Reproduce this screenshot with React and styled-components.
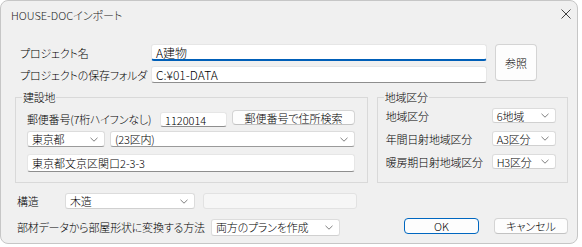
import React from "react";
import styled, { createGlobalStyle } from "styled-components";

const GlobalStyle = createGlobalStyle`
  body {
    margin: 0;
    background: #fff;
    font-family: "Noto Sans CJK JP", "Noto Sans", sans-serif;
    font-size: 11px;
    font-weight: 300;
    letter-spacing: -0.2px;
    color: #000;
    font-feature-settings: "palt";
  }
`;

const Window = styled.div`
  box-sizing: border-box;
  width: 578px;
  height: 244px;
  border: 1px solid #c6c6c6;
  border-radius: 8px;
  background: #f0f0f0;
  display: flex;
  flex-direction: column;
  overflow: hidden;
`;

const TitleBar = styled.div`
  height: 27px;
  display: flex;
  align-items: center;
  justify-content: space-between;
  padding: 0 6px 0 10px;
  font-size: 11px;
  letter-spacing: 0;
  color: #1b1b1b;
`;

const Close = styled.svg`
  width: 10px;
  height: 10px;
  margin-top: -2px;
`;

const Content = styled.div`
  padding: 16px 9px 0 0;
`;

const ProjectSection = styled.div`
  display: flex;
  padding-left: 19px;
`;

const ProjectFields = styled.div`
  display: grid;
  grid-template-columns: 131px 336px;
  grid-auto-rows: 17px;
  row-gap: 5px;
  align-items: center;
`;

const Label = styled.span`
  white-space: nowrap;
  width: ${(p) => (p.$w ? `${p.$w}px` : "auto")};
  flex: none;
`;

const Field = styled.div`
  box-sizing: border-box;
  width: ${(p) => (p.$w ? `${p.$w}px` : "auto")};
  height: ${(p) => p.$h || 16}px;
  background: ${(p) => (p.$disabled ? "#f6f6f6" : "#fff")};
  border: 1px solid ${(p) => (p.$disabled ? "#e2e2e2" : "#e6e6e6")};
  border-bottom: ${(p) =>
    p.$focus
      ? "2px solid #005fb8"
      : p.$disabled
      ? "1px solid #e2e2e2"
      : "1px solid #8e8e8e"};
  border-radius: 3px;
  padding: 0 4px;
  display: flex;
  align-items: center;
  white-space: nowrap;
  overflow: hidden;
  font-size: ${(p) => p.$fs || 11}px;
  letter-spacing: 0;
  flex: none;
`;

const ComboBox = styled.div`
  box-sizing: border-box;
  width: ${(p) => p.$w}px;
  height: ${(p) => p.$h || 16}px;
  background: #fff;
  border: 1px solid #dcdcdc;
  border-bottom-color: ${(p) => (p.$line ? "#9a9a9a" : "#d0d0d0")};
  border-radius: 3px;
  padding: 0 6px 0 4px;
  display: flex;
  align-items: center;
  justify-content: space-between;
  white-space: nowrap;
  flex: none;
`;

const Chevron = styled.svg`
  width: 8px;
  height: 5px;
  flex: none;
`;

const Button = styled.button`
  box-sizing: border-box;
  width: ${(p) => p.$w}px;
  height: ${(p) => p.$h || 16}px;
  padding: 0;
  font: inherit;
  color: #000;
  background: #fdfdfd;
  border: 1px solid ${(p) => (p.$primary ? "#0067c0" : "#d4d4d4")};
  border-bottom-color: ${(p) => (p.$primary ? "#0067c0" : "#c2c2c2")};
  border-radius: 4px;
  display: flex;
  align-items: center;
  justify-content: center;
  flex: none;
  align-self: ${(p) => p.$self || "auto"};
`;

const GroupsRow = styled.div`
  display: flex;
  gap: 9px;
  padding-left: 14px;
  margin-top: 8px;
`;

const Group = styled.fieldset`
  box-sizing: border-box;
  width: ${(p) => p.$w}px;
  height: 92px;
  margin: 0;
  padding: 0;
  border: 1px solid #d9d9d9;
  min-width: 0;
`;

const Legend = styled.legend`
  margin-left: 6px;
  padding: 0 1px;
  line-height: 13px;
  font-size: 11px;
`;

const SiteBody = styled.div`
  display: flex;
  flex-direction: column;
  padding: 6px 13px 0 11px;
`;

const Row = styled.div`
  display: flex;
  align-items: center;
  gap: ${(p) => p.$gap ?? 5}px;
  height: ${(p) => p.$h}px;
  margin-top: ${(p) => p.$mt ?? 0}px;
`;

const RegionBody = styled.div`
  display: grid;
  grid-template-columns: 106px 64px;
  grid-auto-rows: 15px;
  row-gap: 8px;
  align-items: center;
  padding: 4px 11px 0 8px;
`;

const BottomSection = styled.div`
  display: flex;
  flex-direction: column;
  padding-left: 16px;
  margin-top: 10px;
`;

const Actions = styled.div`
  display: flex;
  gap: 15px;
  margin-left: auto;
  align-self: flex-start;
`;

function Caret() {
  return (
    <Chevron viewBox="0 0 8 5">
      <path d="M0.5 0.8 L4 4.2 L7.5 0.8" fill="none" stroke="#707070" strokeWidth="0.9" />
    </Chevron>
  );
}

function Combo({ w, h, line, children }) {
  return (
    <ComboBox $w={w} $h={h} $line={line}>
      <span>{children}</span>
      <Caret />
    </ComboBox>
  );
}

export default function App() {
  return (
    <>
      <GlobalStyle />
      <Window>
        <TitleBar>
          <span>HOUSE-DOCインポート</span>
          <Close viewBox="0 0 10 10">
            <path d="M0.5 0.5 L9.5 9.5 M9.5 0.5 L0.5 9.5" stroke="#2b2b2b" strokeWidth="0.9" />
          </Close>
        </TitleBar>
        <Content>
          <ProjectSection>
            <ProjectFields>
              <Label>プロジェクト名</Label>
              <Field $w={336} $h={17} $focus $fs={12}>A建物</Field>
              <Label>プロジェクトの保存フォルダ</Label>
              <Field $w={336} $h={17} $fs={12}>C:¥01-DATA</Field>
            </ProjectFields>
            <Button $w={42} $h={37} style={{ marginLeft: 8 }}>参照</Button>
          </ProjectSection>

          <GroupsRow>
            <Group $w={354}>
              <Legend>建設地</Legend>
              <SiteBody>
                <Row $h={17}>
                  <Label $w={128}>郵便番号(7桁ハイフンなし)</Label>
                  <Field $w={67} $h={15} style={{ alignSelf: "flex-end" }}>1120014</Field>
                  <Button $w={123} $h={15} $self="flex-start">郵便番号で住所検索</Button>
                </Row>
                <Row $h={16} $mt={4}>
                  <Combo w={78} line>東京都</Combo>
                  <Combo w={245} line>(23区内)</Combo>
                </Row>
                <Row $h={18} $mt={7}>
                  <Field $w={328} $h={18}>東京都文京区関口2-3-3</Field>
                </Row>
              </SiteBody>
            </Group>
            <Group $w={192}>
              <Legend>地域区分</Legend>
              <RegionBody>
                <Label>地域区分</Label>
                <Combo w={64} h={15}>6地域</Combo>
                <Label>年間日射地域区分</Label>
                <Combo w={64} h={15}>A3区分</Combo>
                <Label>暖房期日射地域区分</Label>
                <Combo w={64} h={15}>H3区分</Combo>
              </RegionBody>
            </Group>
          </GroupsRow>

          <BottomSection>
            <Row $h={16} $gap={0}>
              <Label $w={48}>構造</Label>
              <Combo w={130}>木造</Combo>
              <Field $w={154} $disabled style={{ marginLeft: 8 }} />
            </Row>
            <Row $h={18} $mt={9} $gap={0}>
              <Label $w={194}>部材データから部屋形状に変換する方法</Label>
              <Combo w={129} h={17}>両方のプランを作成</Combo>
              <Actions>
                <Button $w={75} $primary>OK</Button>
                <Button $w={74}>キャンセル</Button>
              </Actions>
            </Row>
          </BottomSection>
        </Content>
      </Window>
    </>
  );
}
